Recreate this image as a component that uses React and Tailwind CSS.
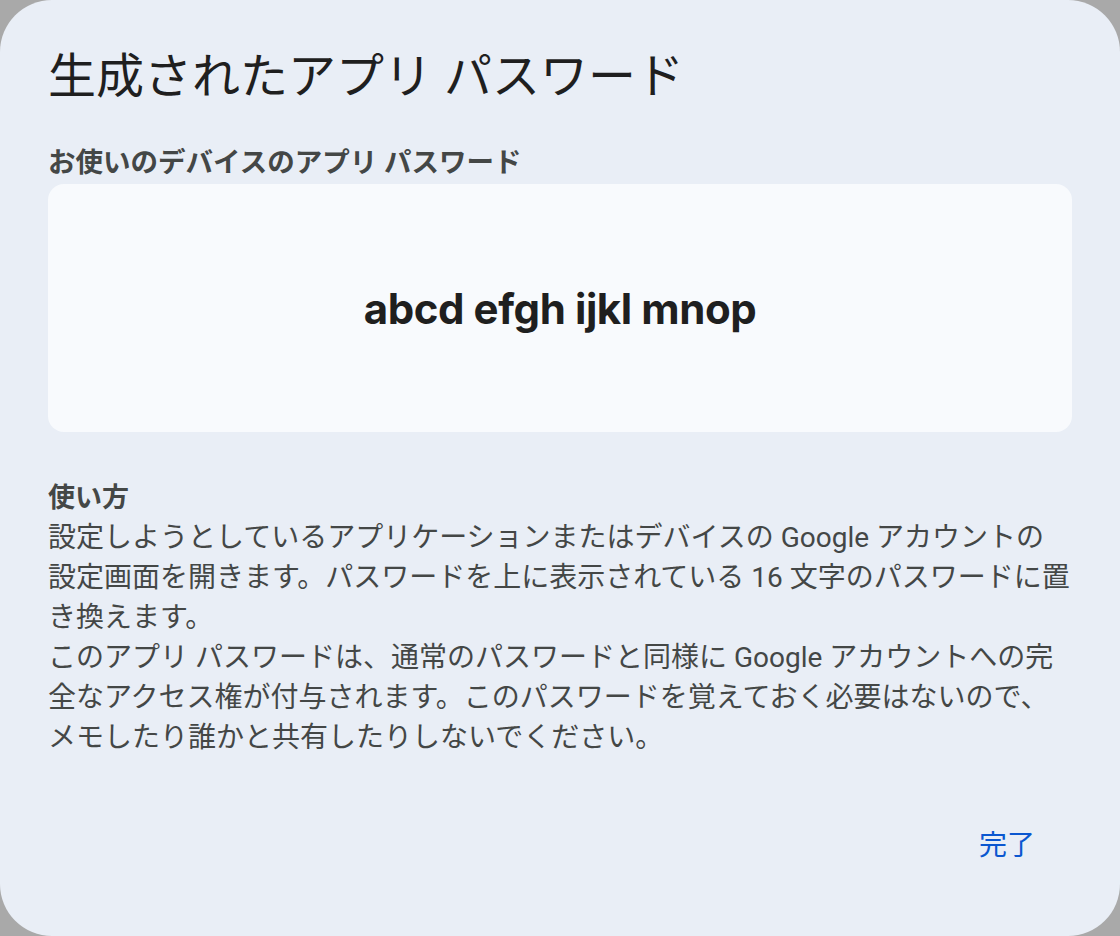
export default function App() {
  const jp = { fontFamily: 'Roboto, "Noto Sans CJK JP", sans-serif' };

  return (
    <div className="w-[1120px] h-[936px] bg-[#a9a9a9]" style={jp}>
      <div className="h-full rounded-[52px] bg-[#e9eef6] px-12 pt-[49px]">
        {/* Title */}
        <h1 className="text-[48px] leading-[56px] font-normal text-[#1f1f1f]">
          生成されたアプリ パスワード
        </h1>

        {/* Password */}
        <h2 className="mt-[42px] text-[27.5px] leading-[32px] font-bold text-[#444746]">
          お使いのデバイスのアプリ パスワード
        </h2>
        <div className="mt-[5px] h-[248px] rounded-[16px] bg-[#f8fafd] flex items-center justify-center">
          <span className="font-['Inter',sans-serif] font-bold text-[42px] tracking-[-0.01em] text-[#1f1f1f]">
            abcd efgh ijkl mnop
          </span>
        </div>

        {/* How to */}
        <div className="mt-[46px] text-[28px] leading-[40px] text-[#444746] whitespace-nowrap">
          <p className="text-[27px] font-bold">使い方</p>
          <p>
            設定しようとしているアプリケーションまたはデバイスの Google アカウントの
            <br />
            設定画面を開きます。パスワードを上に表示されている 16 文字のパスワードに置
            <br />
            き換えます。
          </p>
          <p>
            このアプリ パスワードは、通常のパスワードと同様に Google アカウントへの完
            <br />
            全なアクセス権が付与されます。このパスワードを覚えておく必要はないので、
            <br />
            メモしたり誰かと共有したりしないでください。
          </p>
        </div>

        {/* Actions */}
        <div className="mt-[64px] flex justify-end">
          <button className="mr-[13px] h-12 px-6 rounded-full text-[28px] text-[#0b57d0]">
            完了
          </button>
        </div>
      </div>
    </div>
  );
}
